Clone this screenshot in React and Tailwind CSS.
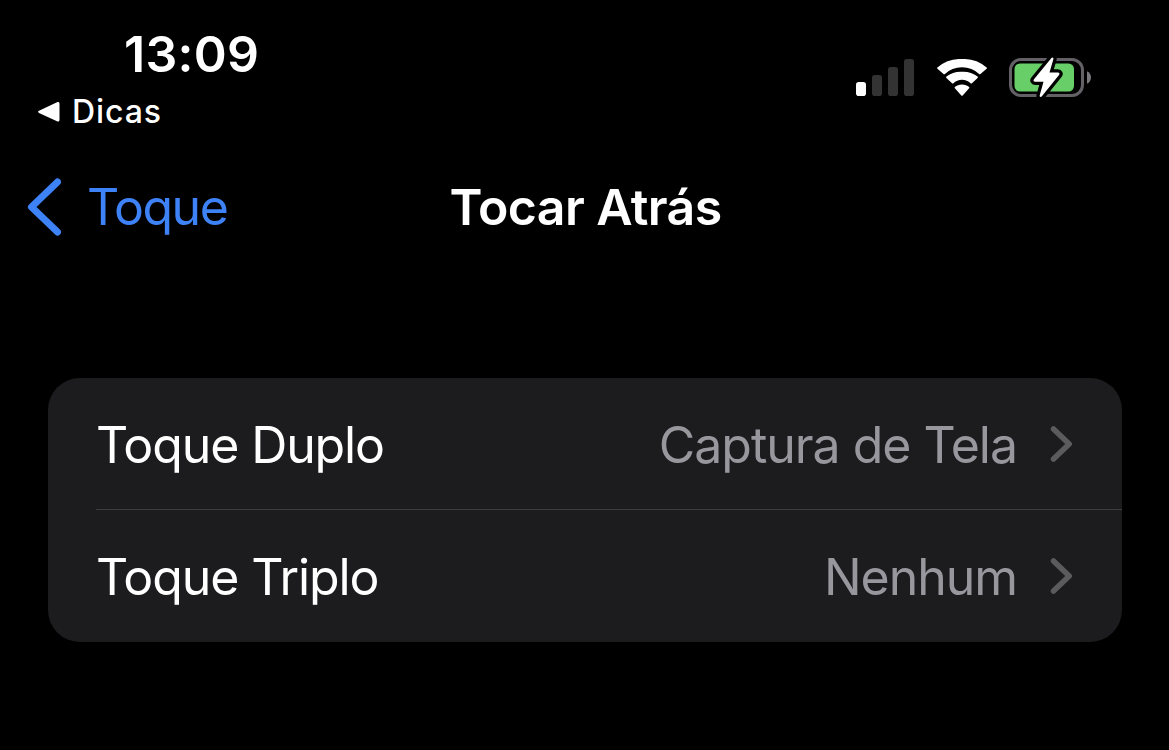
const settings = [
  { label: "Toque Duplo", value: "Captura de Tela" },
  { label: "Toque Triplo", value: "Nenhum" },
];

const SignalIcon = () => (
  <svg width="58" height="38" viewBox="0 0 58 38">
    <rect x="0" y="23" width="10" height="14" rx="2.8" fill="#fff" />
    <rect x="16" y="16" width="10" height="21" rx="2.8" fill="#333" />
    <rect x="32" y="8" width="10" height="29" rx="2.8" fill="#333" />
    <rect x="48" y="0" width="10" height="37" rx="2.8" fill="#333" />
  </svg>
);

const WifiIcon = () => (
  <svg width="52" height="38" viewBox="0 0 52 38" fill="#fff">
    <path d="M26 8.2a25 25 0 0 1 17.4 7l.8 0 6.4-5.5a.9.9 0 0 0 0-1.300A36 36 0 0 0 26 0 36 36 0 0 0 1.400 8.400a.9.9 0 0 0 0 1.300l6.400 5.500.8 0A25 25 0 0 1 26 8.200z" />
    <path d="M26 20.800a13 13 0 0 1 8.800 3.600l.9 0 5.900-5.500a.9.9 0 0 0 0-1.300A23 23 0 0 0 26 12.700a23 23 0 0 0-15.600 4.900.9.9 0 0 0 0 1.300l5.900 5.500.9 0A13 13 0 0 1 26 20.800z" />
    <path d="M26 25.500c-2.800 0-5.400 1-7.100 2.500a.9.9 0 0 0 0 1.300l6.400 7.100a1 1 0 0 0 1.400 0l6.400-7.100a.9.900 0 0 0 0-1.300c-1.700-1.500-4.300-2.500-7.100-2.500z" />
  </svg>
);

const BatteryIcon = () => (
  <svg className="-ml-px" width="83" height="44" viewBox="0 1 83 44">
    <rect x="1.5" y="4.5" width="72" height="36" rx="10.5" fill="none" stroke="#636165" strokeWidth="3" />
    <path d="M78 16.300c2.400 1 4 3.500 4 6.200s-1.600 5.200-4 6.200z" fill="#7b797d" />
    <rect x="5.500" y="8.500" width="59.500" height="28" rx="5.500" fill="#68ce67" />
    <path
      d="M42.200 3.300L25 24.300c-1 1.200-.4 2.400 1.100 2.400h8.400L30.800 40c-.6 1.900.9 2.600 2.100 1.200L50 20c1-1.200.4-2.400-1.100-2.400h-8.400L44.300 4.500c.6-1.900-.9-2.600-2.100-1.200z"
      fill="#fff"
      stroke="#000"
      strokeWidth="6.5"
      strokeLinejoin="round"
      paintOrder="stroke"
    />
  </svg>
);

const StatusBar = () => (
  <header className="flex h-[155px] justify-between pt-6 pr-[77px] pl-[38px] text-white">
    <div>
      <div className="pl-[86px] text-[50px] leading-[60px] font-semibold tracking-[0.3px]">13:09</div>
      <div className="mt-2 flex items-center gap-3">
        <svg width="22" height="22" viewBox="0 0 22 22">
          <path d="M1 9.700L19 1.300C20.500 .6 21.500 1.200 21.500 2.800V18.800C21.500 20.400 20.500 21 19 20.300L1 12C-.2 11.400-.2 10.300 1 9.700Z" fill="#fff" />
        </svg>
        <span className="text-[32px] leading-10 font-[450] tracking-[0.9px]">Dicas</span>
      </div>
    </div>
    <div className="mt-[31px] flex h-[46px] items-center gap-[22px]">
      <SignalIcon />
      <WifiIcon />
      <BatteryIcon />
    </div>
  </header>
);

const NavBar = () => (
  <nav className="grid h-[104px] grid-cols-[1fr_auto_1fr] items-center px-[27px]">
    <button className="flex items-center gap-[26px] text-left text-[#3e82f7]">
      <svg width="34" height="58" viewBox="0 0 34 58" fill="none">
        <path d="M30.500 4L4.500 29L30.500 54" stroke="currentColor" strokeWidth="7" strokeLinecap="round" strokeLinejoin="round" />
      </svg>
      <span className="text-[50px] leading-[60px] tracking-[-1.45px]">Toque</span>
    </button>
    <h1 className="pl-[2px] text-[50px] leading-[60px] font-semibold tracking-[-0.6px] text-white">Tocar Atrás</h1>
  </nav>
);

const SettingRow = ({ label, value }) => (
  <li className="pl-12 not-last:[&>button]:border-[#3d3d41]">
    <button className="flex h-[132px] w-full items-center border-b border-transparent pr-[49px] text-[50px] leading-[60px] tracking-[-1.1px]">
      <span className="pt-[2px] text-white">{label}</span>
      <span className="ml-auto pt-[2px] tracking-[-1.03px] text-[#98979e]">{value}</span>
      <svg className="ml-[33px]" width="23" height="38" viewBox="0 0 23 38" fill="none">
        <path d="M3.500 4L19.200 19L3.500 34" stroke="#5b5b5e" strokeWidth="5.500" strokeLinecap="round" strokeLinejoin="round" />
      </svg>
    </button>
  </li>
);

const App = () => {
  return (
    <div className="h-screen min-h-[750px] overflow-hidden bg-black font-['Inter',sans-serif]">
      <StatusBar />
      <NavBar />
      <main className="mt-[119px] pr-[47px] pl-12">
        <ul className="overflow-hidden rounded-[32px] bg-[#1c1c1e]">
          {settings.map((item) => (
            <SettingRow key={item.label} label={item.label} value={item.value} />
          ))}
        </ul>
      </main>
    </div>
  );
};

export default App;
